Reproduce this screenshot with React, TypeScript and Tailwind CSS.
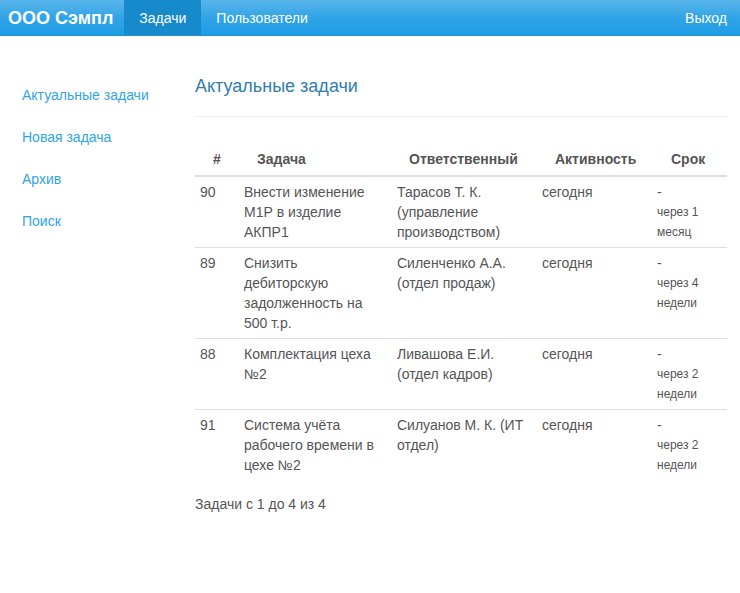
const rows = [
  { id: "90", task: ["Внести изменение", "М1Р в изделие", "АКПР1"], resp: ["Тарасов Т. К.", "(управление", "производством)"], act: "сегодня", due: ["через 1", "месяц"] },
  { id: "89", task: ["Снизить", "дебиторскую", "задолженность на", "500 т.р."], resp: ["Силенченко А.А.", "(отдел продаж)"], act: "сегодня", due: ["через 4", "недели"] },
  { id: "88", task: ["Комплектация цеха", "№2"], resp: ["Ливашова Е.И.", "(отдел кадров)"], act: "сегодня", due: ["через 2", "недели"] },
  { id: "91", task: ["Система учёта", "рабочего времени в", "цехе №2"], resp: ["Силуанов М. К. (ИТ", "отдел)"], act: "сегодня", due: ["через 2", "недели"] },
];

function Lines({ items }: { items: string[] }) {
  return (
    <>
      {items.map((t, i) => (
        <div key={i} className="whitespace-nowrap">{t}</div>
      ))}
    </>
  );
}

export default function App() {
  return (
    <div className="min-h-[593px] bg-white text-[14px] leading-[20px] text-[#555555]" style={{ fontFamily: '"Liberation Sans", Arial, sans-serif' }}>
      {/* navbar */}
      <div className="flex h-[36px] items-stretch border-b border-[#1a8fd2] bg-gradient-to-b from-[#58b6ec] via-[#30a4e7] to-[#1d9ce5] text-white">
        <div className="flex items-center pl-[8px] pr-[11px] text-[18px] font-bold">ООО Сэмпл</div>
        <div className="flex items-center bg-[#178acc] px-[15px]">Задачи</div>
        <div className="flex items-center px-[15px]">Пользователи</div>
        <div className="ml-auto flex items-center pr-[13px]">Выход</div>
      </div>

      <div className="flex">
        {/* sidebar */}
        <div className="w-[195px] shrink-0 pl-[22px] pt-[49px] text-[#2fa4e7]">
          <div className="flex flex-col gap-[22px]">
            <div>Актуальные задачи</div>
            <div>Новая задача</div>
            <div>Архив</div>
            <div>Поиск</div>
          </div>
        </div>

        {/* main */}
        <div className="w-[532px] pt-[40px]">
          <h1 className="text-[18px] leading-[20px] text-[#317eac]">Актуальные задачи</h1>
          <div className="mt-[20px] border-t border-[#eeeeee]" />

          <table className="mt-[32px] w-full border-collapse">
            <colgroup>
              <col className="w-[44px]" />
              <col className="w-[153px]" />
              <col className="w-[145px]" />
              <col className="w-[115px]" />
              <col className="w-[75px]" />
            </colgroup>
            <thead>
              <tr className="border-b-2 border-[#dddddd] text-left font-bold">
                <th className="pb-[6px] pl-[18px] font-bold">#</th>
                <th className="pb-[6px] pl-[18px] font-bold">Задача</th>
                <th className="pb-[6px] pl-[17px] font-bold">Ответственный</th>
                <th className="pb-[6px] pl-[18px] font-bold">Активность</th>
                <th className="pb-[6px] pl-[19px] font-bold">Срок</th>
              </tr>
            </thead>
            <tbody>
              {rows.map((r, i) => (
                <tr key={r.id} className={i < rows.length - 1 ? "border-b border-[#dddddd] align-top" : "align-top"}>
                  <td className="px-[5px] py-[5px]">{r.id}</td>
                  <td className="px-[5px] py-[5px]"><Lines items={r.task} /></td>
                  <td className="px-[5px] py-[5px]"><Lines items={r.resp} /></td>
                  <td className="px-[5px] py-[5px]">{r.act}</td>
                  <td className="px-[5px] py-[5px]">
                    <div>-</div>
                    {r.due.map((d, j) => (
                      <div key={j} className="whitespace-nowrap text-[12px] leading-[20px]">{d}</div>
                    ))}
                  </td>
                </tr>
              ))}
            </tbody>
          </table>

          <div className="mt-[14px]">Задачи с 1 до 4 из 4</div>
        </div>
      </div>
    </div>
  );
}
